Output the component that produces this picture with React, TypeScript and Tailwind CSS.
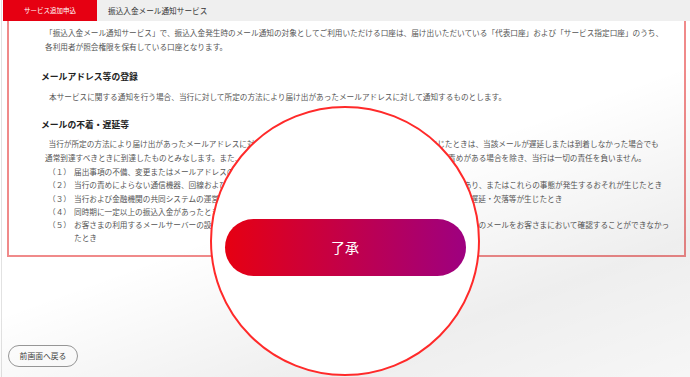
import React from "react";

const font = { fontFamily: '"Noto Sans CJK JP", "Noto Sans", sans-serif' };

export default function App() {
  return (
    <div
      className="relative w-[690px] h-[377px] overflow-hidden bg-white text-[#555] [text-spacing-trim:space-all]"
      style={font}
    >
      <div className="ml-[1px] h-full border-l border-[#e2e2e2] flex flex-col">
        {/* tab bar */}
        <div className="flex h-[21px] shrink-0">
          <div className="w-[94px] ml-[1px] bg-[#e60012] text-white text-[6.5px] flex items-center justify-center">
            サービス追加申込
          </div>
          <div className="flex-1 bg-[#efefef] text-[#333] text-[7.65px] flex items-center pl-[11px]">
            振込入金メール通知サービス
          </div>
        </div>

        {/* panel */}
        <div className="ml-[5px] w-[679px] border-x-2 border-b-2 border-[#f08a8a] pt-[5px] pb-[10px] text-[7.65px] leading-[14px] whitespace-nowrap">
          <div className="pl-[36px]">
            <div>
              「振込入金メール通知サービス」で、振込入金発生時のメール通知の対象としてご利用いただける口座は、届け出いただいている「代表口座」および「サービス指定口座」のうち、
            </div>
            <div>各利用者が照会権限を保有している口座となります。</div>
          </div>

          <h3 className="mt-[16px] pl-[32px] text-[8.8px] font-bold text-[#222]">
            メールアドレス等の登録
          </h3>
          <div className="mt-[6px] pl-[36px] indent-[4px]">
            本サービスに関する通知を行う場合、当行に対して所定の方法により届け出があったメールアドレスに対して通知するものとします。
          </div>

          <h3 className="mt-[14px] pl-[32px] text-[8.8px] font-bold text-[#222]">
            メールの不着・遅延等
          </h3>
          <div className="mt-[5px] pl-[36px]">
            <div className="pl-[3.5px]">
              当行が所定の方法により届け出があったメールアドレスに対して通知をした場合において、通信障害等の事由が生じたときは、当該メールが遅延しまたは到着しなかった場合でも
            </div>
            <div>
              通常到達すべきときに到達したものとみなします。また、これらの事由によりお客様に生じた損害については、当行に責めがある場合を除き、当行は一切の責任を負いません。
            </div>
          </div>
          <ul className="pl-[36px] leading-[13.3px]">
            {[
              ["（１）", "届出事項の不備、変更またはメールアドレスの誤りがあったとき"],
              [
                "（２）",
                "当行の責めによらない通信機器、回線およびコンピュータ等の障害、電話の不通等の通信手段の障害等の事由等があり、またはこれらの事態が発生するおそれが生じたとき",
              ],
              [
                "（３）",
                "当行および金融機関の共同システムの運営体の事情等により、メール通知の発信・伝達等に障害が生じ、通知内容の遅延・欠落等が生じたとき",
              ],
              ["（４）", "同時期に一定以上の振込入金があったとき"],
            ].map(([n, t]) => (
              <li key={n} className="flex">
                <span className="ml-[3px] w-[26px] shrink-0">{n}</span>
                <span>{t}</span>
              </li>
            ))}
            <li className="flex">
              <span className="ml-[3px] w-[26px] shrink-0">（５）</span>
              <span>
                お客さまの利用するメールサーバーの設定、容量不足、迷惑メールの判定その他の事由により、当行が送信した通知等のメールをお客さまにおいて確認することができなかっ
                <br />
                たとき
              </span>
            </li>
          </ul>
        </div>

        {/* back button */}
        <div className="mt-auto mb-[10px] ml-[6px]">
          <button className="w-[70px] h-[22px] rounded-full border border-[#999] bg-white text-[#444] text-[7.8px] flex items-center justify-center">
            前画面へ戻る
          </button>
        </div>
      </div>

      {/* soft background shade */}
      <div className="pointer-events-none absolute inset-0 bg-[linear-gradient(160deg,transparent_50%,rgba(0,0,0,0.065)_78%,rgba(0,0,0,0.035)_100%)]" />

      {/* magnifier */}
      <div className="absolute left-[210px] top-[106px] w-[270px] h-[270px] rounded-full border-2 border-[#ff2a2a] bg-white flex items-center justify-center">
        <button className="mt-[13px] w-[241px] h-[57px] rounded-full bg-[linear-gradient(90deg,#e60012,#9e0080)] text-white text-[14px]">
          了承
        </button>
      </div>
    </div>
  );
}
